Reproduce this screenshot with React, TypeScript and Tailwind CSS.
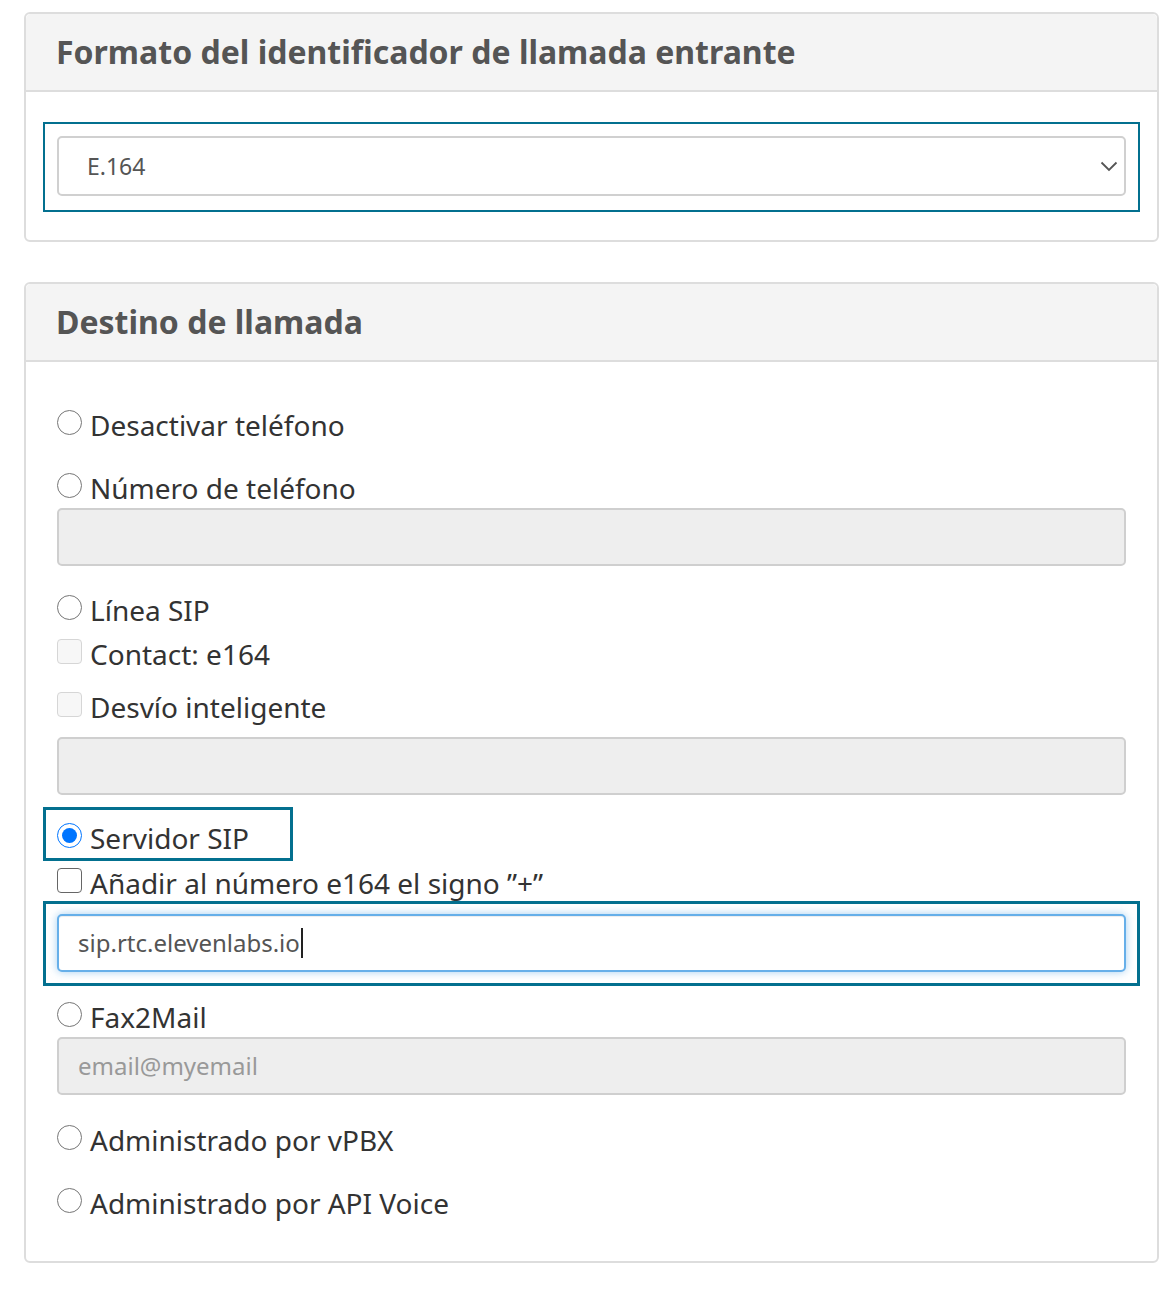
import React from "react"

const Radio = ({ checked = false }: { checked?: boolean }) => (
  <span
    className={
      "mr-[8px] mt-[-5px] flex h-[25px] w-[25px] shrink-0 items-center justify-center rounded-full border-[1.5px] bg-white " +
      (checked ? "border-[#0075ff]" : "border-[#767676]")
    }
  >
    {checked && <span className="h-[15px] w-[15px] rounded-full bg-[#0075ff]" />}
  </span>
)

const Checkbox = ({ disabled = false }: { disabled?: boolean }) => (
  <span
    className={
      "mr-[8px] mt-[-5px] h-[25px] w-[25px] shrink-0 rounded-[4px] border-[1.5px] " +
      (disabled ? "border-[#d6d6d6] bg-[#f7f7f7]" : "border-[#666] bg-white")
    }
  />
)

const Row = ({ children, className = "" }: { children: React.ReactNode; className?: string }) => (
  <div className={"flex h-[36px] items-center text-[28px] leading-[36px] text-[#333] " + className}>{children}</div>
)

const DisabledInput = ({ placeholder, className = "" }: { placeholder?: string; className?: string }) => (
  <div
    className={
      "flex h-[58px] items-center rounded-[5px] border-2 border-[#cfcfcf] bg-[#eeeeee] px-[19px] text-[24px] text-[#999] " +
      className
    }
  >
    {placeholder}
  </div>
)

const Card = ({ title, children, className = "" }: { title: string; children: React.ReactNode; className?: string }) => (
  <div className={"rounded-[6px] border-2 border-[#dddddd] bg-white " + className}>
    <div className="flex h-[78px] items-center rounded-t-[5px] border-b-2 border-[#dddddd] bg-[#f4f4f4] px-[30px]">
      <h2 className="text-[32px] font-bold text-[#555]">{title}</h2>
    </div>
    {children}
  </div>
)

export default function App() {
  return (
    <div className="min-h-[1290px] bg-white pl-[24px] pr-[13px] pt-[12px]" style={{ fontFamily: '"Noto Sans", "Open Sans", sans-serif' }}>
      <Card title="Formato del identificador de llamada entrante">
        <div className="px-[31px] pb-[28px] pt-[30px]">
          <div className="-mx-[14px] border-2 border-[#03708f] px-[12px] pb-[14px] pt-[12px]">
            <div className="flex h-[60px] items-center justify-between rounded-[5px] border-2 border-[#d0d0d0] bg-white pl-[28px] pr-[6px] text-[23px] text-[#555]">
              <span>E.164</span>
              <svg width="18" height="11" viewBox="0 0 18 11" fill="none" stroke="#555" strokeWidth="1.8">
                <polyline points="1.5,1.5 9,9 16.5,1.5" />
              </svg>
            </div>
          </div>
        </div>
      </Card>

      <Card title="Destino de llamada" className="mt-[40px]">
        <div className="flex flex-col px-[31px] pb-[40px] pt-[45px]">
          <Row>
            <Radio />
            Desactivar teléfono
          </Row>
          <Row className="mt-[27px]">
            <Radio />
            Número de teléfono
          </Row>
          <DisabledInput className="mt-[2px]" />
          <Row className="mt-[26px]">
            <Radio />
            Línea SIP
          </Row>
          <Row className="mt-[8px]">
            <Checkbox disabled />
            Contact: e164
          </Row>
          <Row className="mt-[17px]">
            <Checkbox disabled />
            Desvío inteligente
          </Row>
          <DisabledInput className="mt-[12px]" />
          <div className="-ml-[14px] mt-[12px] w-[250px] border-[3px] border-[#03708f] pb-[2px] pl-[11px] pt-[10px]">
            <Row>
              <Radio checked />
              Servidor SIP
            </Row>
          </div>
          <Row className="mt-[4px] h-[35px]">
            <Checkbox />
            Añadir al número e164 el signo ”+”
          </Row>
          <div className="-mx-[14px] border-[3px] border-[#03708f] px-[11px] pb-[11px] pt-[10px]">
            <div className="flex h-[58px] items-center rounded-[5px] border-2 border-[#66afe9] bg-white px-[19px] text-[24px] text-[#555] shadow-[inset_0_1px_1px_rgba(0,0,0,0.075),0_0_8px_rgba(102,175,233,0.6)]">
              sip.rtc.elevenlabs.io
              <span className="ml-[1px] h-[30px] w-[2px] bg-[#222]" />
            </div>
          </div>
          <Row className="mt-[13px]">
            <Radio />
            Fax2Mail
          </Row>
          <DisabledInput className="mt-[2px]" placeholder="email@myemail" />
          <Row className="mt-[27px]">
            <Radio />
            Administrado por vPBX
          </Row>
          <Row className="mt-[27px]">
            <Radio />
            Administrado por API Voice
          </Row>
        </div>
      </Card>
    </div>
  )
}
